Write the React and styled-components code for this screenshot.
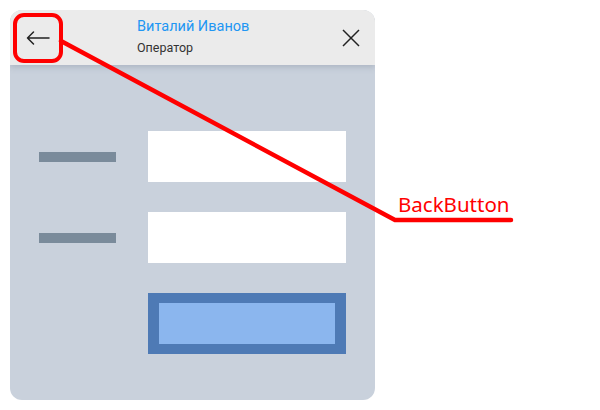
import React from "react";
import styled, { createGlobalStyle } from "styled-components";

const GlobalStyle = createGlobalStyle`
  html, body {
    margin: 0;
    padding: 0;
    background: #ffffff;
  }
  body {
    font-family: Roboto, "Noto Sans", sans-serif;
  }
`;

function ArrowLeft() {
  return (
    <svg width="24" height="24" viewBox="0 0 24 24" fill="none">
      <path
        d="M23 12H1.5M7.5 6L1.5 12l6 6"
        stroke="#222"
        strokeWidth="1.5"
        strokeLinecap="round"
        strokeLinejoin="round"
      />
    </svg>
  );
}

function CloseIcon() {
  return (
    <svg width="18" height="18" viewBox="0 0 18 18" fill="none">
      <path d="M1 1l16 16M17 1L1 17" stroke="#222" strokeWidth="1.5" />
    </svg>
  );
}

function App() {
  return (
    <>
      <GlobalStyle />
      <Page>
        <Card>
          <Header>
            <BackButton>
              <ArrowLeft />
            </BackButton>
            <UserInfo>
              <UserName>Виталий Иванов</UserName>
              <UserRole>Оператор</UserRole>
            </UserInfo>
            <CloseButton>
              <CloseIcon />
            </CloseButton>
          </Header>
          <Body>
            <Row>
              <LabelBar />
              <Field />
            </Row>
            <Row>
              <LabelBar />
              <Field />
            </Row>
            <Row>
              <span />
              <SubmitButton>
                <SubmitInner />
              </SubmitButton>
            </Row>
          </Body>
        </Card>

        <Annotation>
          <svg width="600" height="410" viewBox="0 0 600 410">
            <rect
              x="15"
              y="15"
              width="46"
              height="46"
              rx="9"
              fill="none"
              stroke="#ff0000"
              strokeWidth="4"
            />
            <path
              d="M61 41L395 220H511"
              fill="none"
              stroke="#ff0000"
              strokeWidth="4.5"
              strokeLinecap="round"
              strokeLinejoin="round"
            />
          </svg>
          <AnnotationLabel>BackButton</AnnotationLabel>
        </Annotation>
      </Page>
    </>
  );
}

const Page = styled.div`
  position: relative;
  width: 600px;
  height: 410px;
  padding: 10px;
  box-sizing: border-box;
  overflow: hidden;
`;

const Card = styled.div`
  width: 365px;
  height: 390px;
  border-radius: 12px;
  overflow: hidden;
  background: #c9d1dc;
  display: flex;
  flex-direction: column;
`;

const Header = styled.div`
  position: relative;
  z-index: 1;
  height: 55px;
  flex-shrink: 0;
  background: #ebebeb;
  display: flex;
  align-items: center;
  padding: 0 12px 0 5px;
  box-shadow: 0 2px 6px rgba(80, 90, 110, 0.25);
`;

const BackButton = styled.div`
  width: 46px;
  height: 46px;
  display: flex;
  align-items: center;
  justify-content: center;
`;

const UserInfo = styled.div`
  flex: 1;
  padding-left: 76px;
  display: flex;
  flex-direction: column;
  gap: 4px;
  margin-top: -2px;
`;

const UserName = styled.div`
  font-size: 14.5px;
  color: #2196f3;
  line-height: 18px;
`;

const UserRole = styled.div`
  font-size: 12.5px;
  color: #333;
  line-height: 16px;
`;

const CloseButton = styled.div`
  width: 24px;
  height: 24px;
  display: flex;
  align-items: center;
  justify-content: center;
`;

const Body = styled.div`
  flex: 1;
  padding: 66px 29px 0 29px;
  display: flex;
  flex-direction: column;
  gap: 30px;
`;

const Row = styled.div`
  display: grid;
  grid-template-columns: 77px 198px;
  column-gap: 32px;
  align-items: center;
`;

const LabelBar = styled.div`
  height: 10px;
  background: #7a8b9b;
  margin-top: 1px;
`;

const Field = styled.div`
  height: 51px;
  background: #ffffff;
`;

const SubmitButton = styled.div`
  height: 61px;
  box-sizing: border-box;
  background: #4e7ab5;
  padding: 10px 11px;
`;

const SubmitInner = styled.div`
  height: 100%;
  background: #8bb6ee;
`;

const Annotation = styled.div`
  position: absolute;
  left: 0;
  top: 0;
  width: 600px;
  height: 410px;
  pointer-events: none;
  z-index: 5;

  svg {
    position: absolute;
    left: 0;
    top: 0;
  }
`;

const AnnotationLabel = styled.div`
  position: absolute;
  left: 398px;
  top: 190px;
  font-family: "Noto Sans", "Open Sans", sans-serif;
  font-size: 20.5px;
  line-height: 28px;
  color: #ff0000;
`;

export default App;
